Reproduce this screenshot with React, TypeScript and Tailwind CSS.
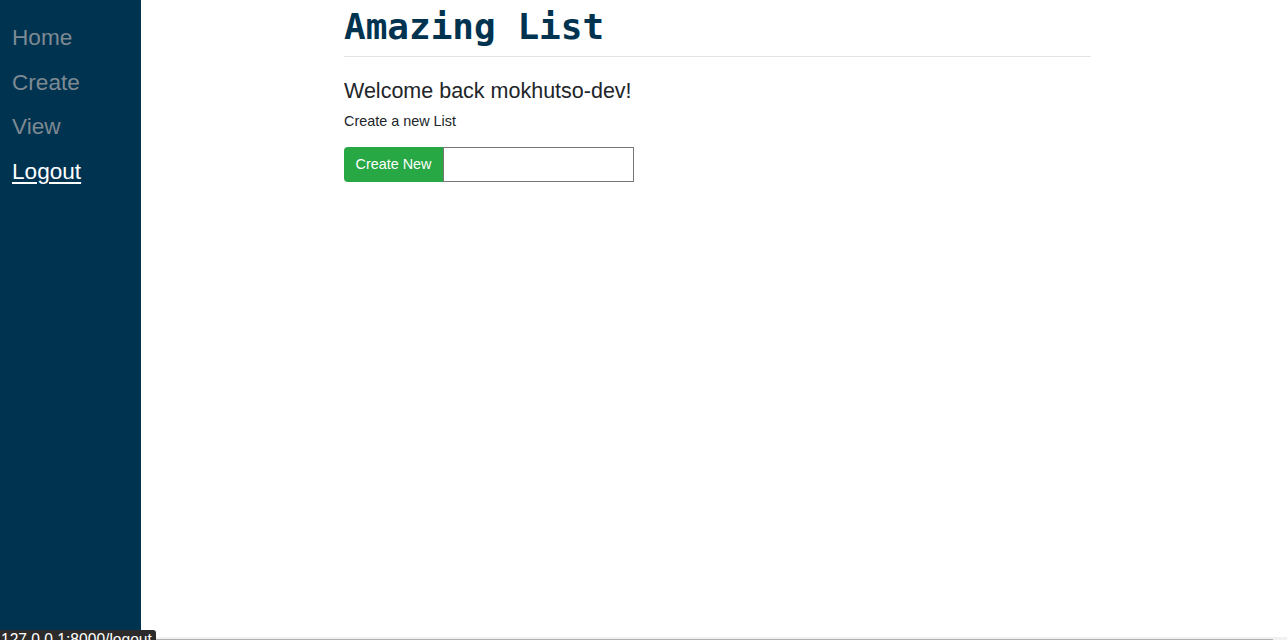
export default function App() {
  return (
    <div className="relative flex h-[640px] w-[1287px] overflow-hidden bg-white font-['Liberation_Sans',Arial,sans-serif]">
      <nav className="flex h-full w-[141px] shrink-0 flex-col bg-[#003350] px-3 pt-[23px]">
        {["Home", "Create", "View"].map((item) => (
          <a key={item} href="#" className="h-[44.6px] text-[22.6px] leading-[29px] text-[#7d8a93]">
            {item}
          </a>
        ))}
        <a href="#" className="text-[22.6px] leading-[29px] text-white underline underline-offset-[3px]">
          Logout
        </a>
      </nav>
      <main className="flex-1">
        <div className="ml-[203px] w-[747px]">
          <h1 className="pt-[5px] font-['DejaVu_Sans_Mono',monospace] text-[36px] font-bold leading-[44px] text-[#003350]">
            Amazing List
          </h1>
          <hr className="mt-[7px] border-t border-[#e3e3e3]" />
          <p className="mt-[21px] text-[21.5px] leading-[26px] text-[#212529]">Welcome back mokhutso-dev!</p>
          <p className="mt-[7px] text-[14.4px] leading-[20px] text-[#212529]">Create a new List</p>
          <div className="mt-[16px] flex h-[35px]">
            <button className="w-[99px] rounded-l-[4px] bg-[#28a745] text-[14.4px] text-white">Create New</button>
            <input className="w-[191px] border border-[#767676] outline-none" />
          </div>
        </div>
      </main>
      <div className="absolute bottom-0 left-0 right-0 h-[3px] bg-[#f1f1f1]">
        <div className="mt-[2px] h-[1px] w-[1273px] bg-[#b0b0b0]" />
      </div>
      <div className="absolute bottom-0 left-0 h-[10px] w-[156px] overflow-hidden rounded-tr-[3px] bg-[#2b2b2b] pl-[1px] text-[15.6px] leading-[20px] text-white">
        127.0.0.1:8000/logout
      </div>
    </div>
  );
}
